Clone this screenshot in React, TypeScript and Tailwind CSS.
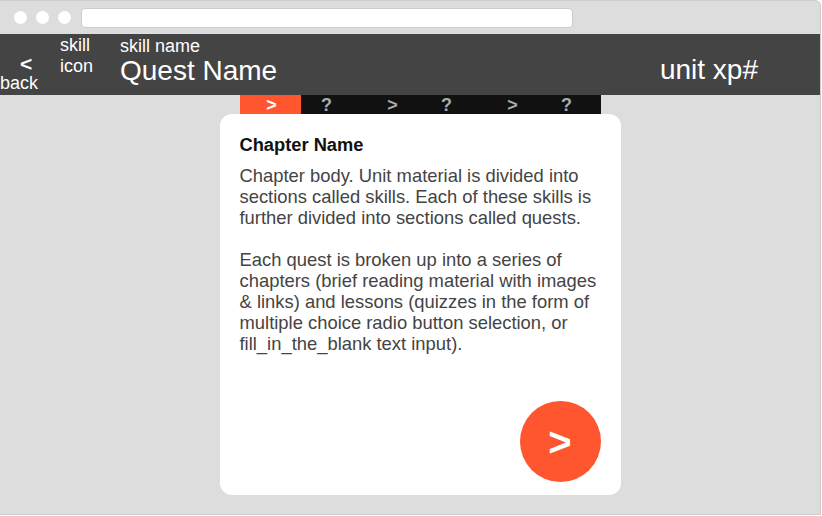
function ProgressStep({ label, active, shift }: { label: string; active?: boolean; shift?: string }) {
  return (
    <div
      className={
        active
          ? "w-[61px] flex items-center justify-center pl-[3px] bg-[#ff5630] text-white font-bold text-[18px] leading-none"
          : "w-[60px] flex items-center justify-center text-[#aaaaaa] font-bold text-[18px] leading-none " + (shift ?? "")
      }
    >
      {label}
    </div>
  )
}

export default function App() {
  return (
    <div className="w-[822px] h-[516px] bg-white font-['Liberation_Sans',Arial,sans-serif]">
      <div className="w-[821px] h-[515px] bg-[#dddddd] border-t border-r border-b border-[#cccccc] rounded-tr-[6px] flex flex-col overflow-hidden">
        {/* browser chrome */}
        <div className="h-[33px] flex items-center pl-[14px] shrink-0">
          <span className="w-[13px] h-[13px] rounded-full bg-white" />
          <span className="w-[13px] h-[13px] rounded-full bg-white ml-[9px]" />
          <span className="w-[13px] h-[13px] rounded-full bg-white ml-[9px]" />
          <div className="ml-[10px] w-[492px] h-[20px] bg-white border border-[#cccccc] rounded-[4px]" />
        </div>

        {/* header */}
        <header className="h-[61px] bg-[#444444] text-white flex shrink-0">
          <div className="w-[60px] flex flex-col justify-end pb-[2px]">
            <span className="ml-[20px] text-[21px] font-bold leading-[18px]">&lt;</span>
            <span className="text-[18px] leading-[20px]">back</span>
          </div>
          <div className="w-[60px] pt-[1px] text-[18px] leading-[21px]">
            <div>skill</div>
            <div>icon</div>
          </div>
          <div className="flex flex-col pt-[2px]">
            <span className="text-[18px] leading-[20px]">skill name</span>
            <span className="text-[28px] leading-[30px]">Quest Name</span>
          </div>
          <div className="ml-auto mr-[62px] pt-[20px] text-[28px] leading-[32px]">unit xp#</div>
        </header>

        {/* main */}
        <main className="flex flex-col items-center flex-1 pl-[20px]">
          <div className="w-[361px] h-[19px] bg-[#111111] flex">
            <ProgressStep label=">" active />
            <ProgressStep label="?" shift="pr-[8px]" />
            <ProgressStep label=">" shift="pl-[4px]" />
            <ProgressStep label="?" shift="pr-[8px]" />
            <ProgressStep label=">" shift="pl-[4px]" />
            <ProgressStep label="?" shift="pr-[8px]" />
          </div>
          <section className="w-[401px] h-[381px] bg-white rounded-[12px] px-[20px] pt-[20px] pb-[13px] flex flex-col">
            <h2 className="text-[18.3px] font-bold text-[#111111] leading-[21px] mb-[10px]">Chapter Name</h2>
            <div className="text-[18.4px] text-[#444444] leading-[21px]">
              <p className="mb-[21px]">
                Chapter body. Unit material is divided into sections called skills. Each of these skills is further divided into sections called quests.
              </p>
              <p>
                Each quest is broken up into a series of chapters (brief reading material with images &amp; links) and lessons (quizzes in the form of multiple choice radio button selection, or fill_in_the_blank text input).
              </p>
            </div>
            <button className="mt-auto self-end w-[81px] h-[81px] rounded-full bg-[#ff5630] text-white text-[40px] font-bold flex items-center justify-center leading-none">
              &gt;
            </button>
          </section>
        </main>
      </div>
    </div>
  )
}
